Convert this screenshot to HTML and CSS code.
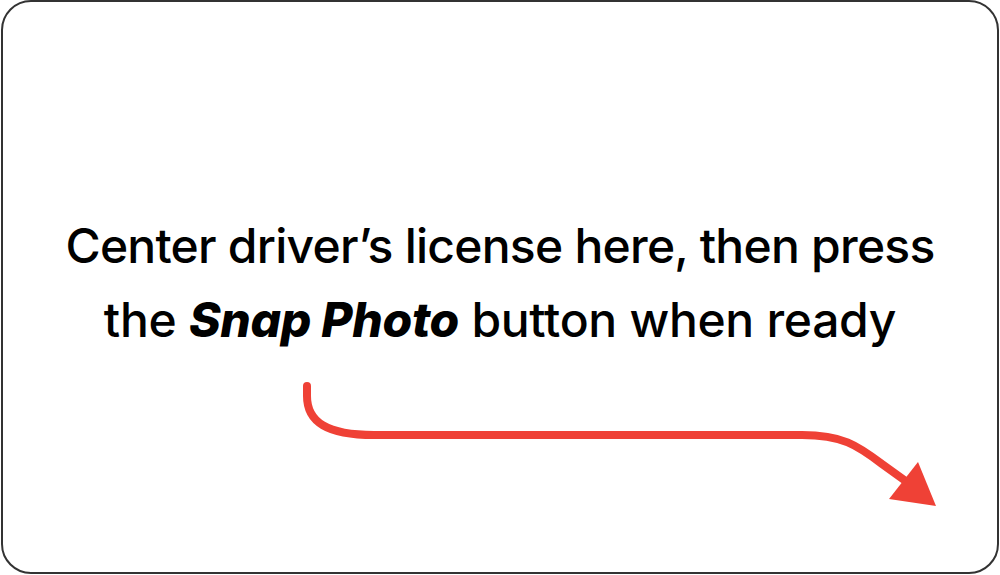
FILE: index.html
```html
<!DOCTYPE html>
<html>
<head>
<meta charset="utf-8">
<link rel="stylesheet" href="styles.css">
</head>
<body>
<div class="card">
  <p class="msg"><span class="line1">Center driver’s license here, then press</span><br><span class="line2">the <em>Snap Photo</em> button when ready</span></p>
  <svg class="arrow" width="1000" height="575" viewBox="0 0 1000 575">
    <path d="M305 386 V396 C305 422 325 435 372 435 H800 C840 435 855 445 880 464 L905 482" fill="none" stroke="#ef4136" stroke-width="8" stroke-linecap="round"/>
    <polygon points="916,462 887,499 934,506" fill="#ef4136"/>
  </svg>
</div>
</body>
</html>
```
FILE: styles.css
```css
html, body { margin: 0; padding: 0; background: #fff; }
.card {
  position: relative;
  box-sizing: border-box;
  width: 998px;
  height: 574px;
  margin: 0 1px;
  border: 2px solid #333;
  border-radius: 30px;
  display: flex;
  align-items: center;
  justify-content: center;
}
.msg {
  margin: 0 0 8px 0;
  font-family: Inter, "Noto Sans", sans-serif;
  font-weight: 500;
  font-size: 48px;
  line-height: 74px;
  text-align: center;
  color: #000;
}
.line1 { letter-spacing: -0.75px; }
.line2 { letter-spacing: -0.3px; }
.msg em { font-style: italic; font-weight: 800; }
.arrow { position: absolute; left: -1px; top: -2px; }
```
